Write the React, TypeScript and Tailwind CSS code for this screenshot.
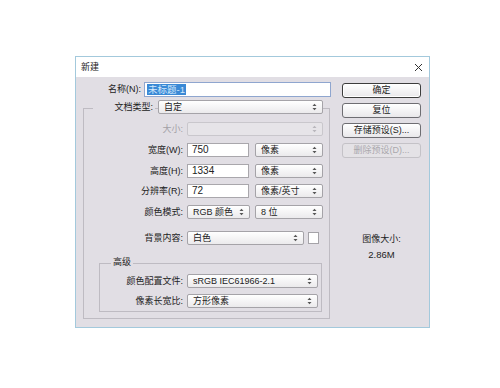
import React from "react";

function Chevron({ light }: { light?: boolean }) {
  const c = light ? "#b8b6bb" : "#555";
  return (
    <svg width="5" height="8" viewBox="0 0 5 8" className="shrink-0">
      <path d="M0.5 3 L2.5 0.8 L4.5 3 Z" fill={c} />
      <path d="M0.5 5 L2.5 7.2 L4.5 5 Z" fill={c} />
    </svg>
  );
}

function Select({ value, w, disabled }: { value?: string; w: string; disabled?: boolean }) {
  return (
    <div
      className={`${w} h-[14px] rounded-[2px] border flex items-center justify-between pl-[5px] pr-[5px] ${
        disabled
          ? "border-[#c9c7cc] bg-[#e6e4e8]"
          : "border-[#a5a3a8] bg-gradient-to-b from-[#ffffff] to-[#ebeaec]"
      }`}
    >
      <span className="leading-none text-[#222]">{value}</span>
      <Chevron light={disabled} />
    </div>
  );
}

function Input({ value, w }: { value: string; w: string }) {
  return (
    <div className={`${w} h-[14px] border border-[#a9a7ac] bg-white flex items-center pl-[4px]`}>
      <span className="leading-none text-[10px] text-[#222]">{value}</span>
    </div>
  );
}

function Btn({ label, primary, disabled }: { label: string; primary?: boolean; disabled?: boolean }) {
  return (
    <div
      className={`w-[79px] h-[15px] rounded-[3px] flex items-center justify-center leading-none ${
        disabled
          ? "border border-[#c4c2c7] bg-[#e4e2e6] text-[#aaa8ad]"
          : primary
          ? "border border-[#3c3c3c] bg-gradient-to-b from-[#ffffff] to-[#e9e8eb] text-[#222] shadow-[inset_0_0_0_1px_#ffffff]"
          : "border border-[#6e6d72] bg-gradient-to-b from-[#ffffff] to-[#e9e8eb] text-[#222]"
      }`}
    >
      {label}
    </div>
  );
}

export default function App() {
  return (
    <div className="w-[500px] h-[388px] bg-white pt-[56px] pl-[75px] font-['Liberation_Sans','Noto_Sans_CJK_SC',sans-serif] text-[9px] text-[#222]">
      <div className="w-[355px] h-[272px] border border-[#a3c9dc] bg-[#e1dee4] flex flex-col">
        {/* title bar */}
        <div className="h-[20px] bg-white flex items-center justify-between pl-[5px] pr-[6px]">
          <span className="text-[9px] leading-none">新建</span>
          <svg width="9" height="9" viewBox="0 0 9 9">
            <path d="M1 1 L8 8 M8 1 L1 8" stroke="#333" strokeWidth="1" />
          </svg>
        </div>

        <div className="flex flex-1">
          {/* left */}
          <div className="w-[256px] flex flex-col">
            <div className="mt-[5px] flex items-center">
              <span className="w-[68px] pr-[3px] text-right leading-none">名称(N):</span>
              <div className="w-[187px] h-[15px] border border-[#8fa6cf] bg-white flex items-center pl-[2px]">
                <span className="bg-[#3a89d6] text-[#d4e8fb] text-[9.5px] leading-[11px] px-[1px]">未标题-1</span>
              </div>
            </div>

            <div className="ml-[7px] mt-[11px] w-[247px] h-[211px] border border-[#bebbc2] flex flex-col">
              {/* preset legend row */}
              <div className="-mt-[9px] flex items-center">
                <span className="ml-[9px] w-[62px] pr-[2px] text-right bg-[#e1dee4] leading-[14px]">文档类型:</span>
                <div className="ml-[3px]">
                  <Select value="自定" w="w-[165px]" />
                </div>
              </div>

              <div className="mt-[8px] flex items-center">
                <span className="w-[103px] pr-[4px] text-right text-[#a3a1a6] leading-none">大小:</span>
                <Select w="w-[136px]" disabled />
              </div>

              <div className="mt-[7px] flex items-center">
                <span className="w-[103px] pr-[4px] text-right leading-none">宽度(W):</span>
                <Input value="750" w="w-[62px]" />
                <div className="ml-[6px]">
                  <Select value="像素" w="w-[68px]" />
                </div>
              </div>

              <div className="mt-[7px] flex items-center">
                <span className="w-[103px] pr-[4px] text-right leading-none">高度(H):</span>
                <Input value="1334" w="w-[62px]" />
                <div className="ml-[6px]">
                  <Select value="像素" w="w-[68px]" />
                </div>
              </div>

              <div className="mt-[6px] flex items-center">
                <span className="w-[103px] pr-[4px] text-right leading-none">分辨率(R):</span>
                <Input value="72" w="w-[62px]" />
                <div className="ml-[6px]">
                  <Select value="像素/英寸" w="w-[68px]" />
                </div>
              </div>

              <div className="mt-[7px] flex items-center">
                <span className="w-[103px] pr-[4px] text-right leading-none">颜色模式:</span>
                <Select value="RGB 颜色" w="w-[63px]" />
                <div className="ml-[5px]">
                  <Select value="8 位" w="w-[68px]" />
                </div>
              </div>

              <div className="mt-[12px] flex items-center">
                <span className="w-[103px] pr-[4px] text-right leading-none">背景内容:</span>
                <Select value="白色" w="w-[117px]" />
                <div className="ml-[4px] w-[11px] h-[12px] border border-[#a5a3a8] bg-white" />
              </div>

              {/* advanced group */}
              <div className="relative ml-[15px] mt-[18px] w-[223px] h-[49px] border border-[#bebbc2] pt-[10px]">
                <span className="absolute left-[11px] -top-[6px] px-[2px] bg-[#e1dee4] leading-none">高级</span>
                <div className="flex items-center">
                  <span className="w-[87px] pr-[4px] text-right leading-none">颜色配置文件:</span>
                  <Select value="sRGB IEC61966-2.1" w="w-[131px]" />
                </div>
                <div className="mt-[6px] flex items-center">
                  <span className="w-[87px] pr-[4px] text-right leading-none">像素长宽比:</span>
                  <Select value="方形像素" w="w-[131px]" />
                </div>
              </div>
            </div>
          </div>

          {/* right */}
          <div className="flex-1 flex flex-col pl-[10px]">
            <div className="mt-[6px] flex flex-col gap-[5px]">
              <Btn label="确定" primary />
              <Btn label="复位" />
              <Btn label="存储预设(S)..." />
              <Btn label="删除预设(D)..." disabled />
            </div>
            <div className="w-[79px] mt-[77px] text-center leading-none">图像大小:</div>
            <div className="w-[79px] mt-[6px] text-center leading-none text-[9.5px]">2.86M</div>
          </div>
        </div>
      </div>
    </div>
  );
}
